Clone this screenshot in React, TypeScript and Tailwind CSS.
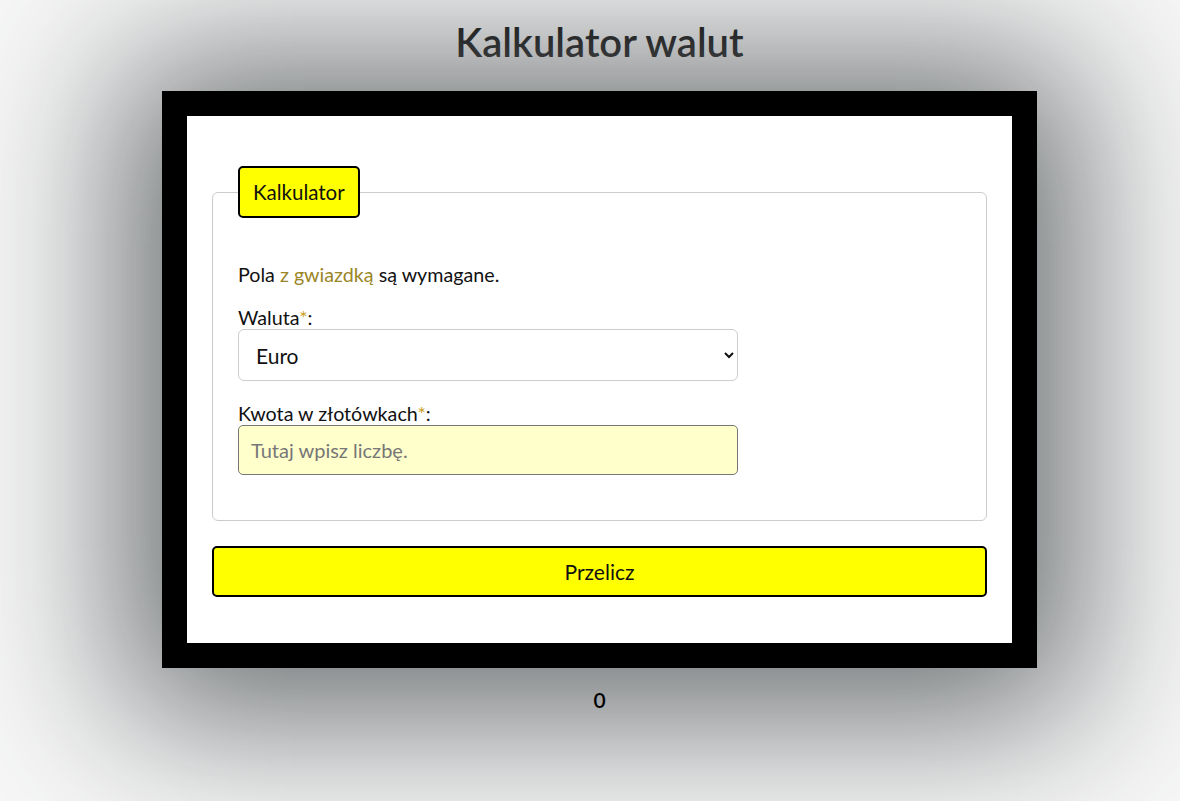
import { useState } from "react";

const App = () => {
  const [currency, setCurrency] = useState("EUR");
  const [amount, setAmount] = useState("");
  const [result, setResult] = useState(0);

  // kursy przykładowe
  const rates: Record<string, number> = { EUR: 4.3, USD: 4.0, GBP: 5.0 };

  const handleSubmit = (e: React.FormEvent) => {
    e.preventDefault();
    const value = parseFloat(amount.replace(",", "."));
    if (!isNaN(value)) setResult(+(value / rates[currency]).toFixed(2));
  };

  return (
    <div className="min-h-screen bg-[#f7f7f7] flex flex-col items-center pl-[19px] font-['Lato',sans-serif] text-[#111]">
      <h1 className="mt-[18px] text-[40px] leading-[48px] font-semibold text-black">
        Kalkulator walut
      </h1>

      <form
        onSubmit={handleSubmit}
        className="mt-[25px] w-[875px] border-[25px] border-black bg-white px-[25px] pt-[50px] pb-[46px] shadow-[0_10px_150px_40px_#6b6f71]"
      >
        <fieldset className="border border-[#cccccc] rounded-[6px] px-[25px] pt-[46px] pb-[45px]">
          <legend className="h-[52px] px-[13px] flex items-center bg-[#ffff00] border-2 border-black rounded-[5px] text-[20.5px]">
            Kalkulator
          </legend>

          <p className="text-[19.7px] leading-[22px]">
            Pola <span className="text-[#9a8626]">z gwiazdką</span> są wymagane.
          </p>

          <label className="block mt-[21px] text-[19.7px] leading-[22px]">
            Waluta<span className="text-[#c9a227]">*</span>:
          </label>
          <select
            value={currency}
            onChange={(e) => setCurrency(e.target.value)}
            className="block w-[500px] h-[52px] pl-[13px] pr-[12px] border border-[#cccccc] rounded-[6px] bg-white text-[21px]"
          >
            <option value="EUR">Euro</option>
            <option value="USD">Dolar amerykański</option>
            <option value="GBP">Funt brytyjski</option>
          </select>

          <label className="block mt-[22px] text-[19.7px] leading-[22px]">
            Kwota w złotówkach<span className="text-[#c9a227]">*</span>:
          </label>
          <input
            type="text"
            value={amount}
            onChange={(e) => setAmount(e.target.value)}
            placeholder="Tutaj wpisz liczbę."
            className="block w-[500px] h-[50px] pl-[12px] border border-[#777777] rounded-[5px] bg-[#ffffcc] text-[20px] placeholder:text-[#777777]"
          />
        </fieldset>

        <button
          type="submit"
          className="mt-[25px] w-full h-[51px] bg-[#ffff00] border-2 border-black rounded-[5px] text-[21px]"
        >
          Przelicz
        </button>
      </form>

      <p className="mt-[19px] text-[21px] leading-[26px] font-semibold text-black">{result}</p>
    </div>
  );
};

export default App;
